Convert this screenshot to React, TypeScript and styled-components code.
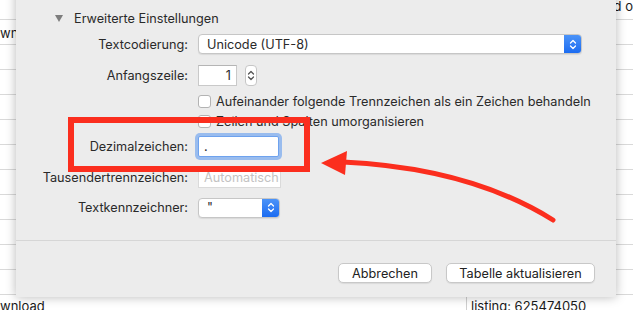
import React from 'react'
import styled, { createGlobalStyle } from 'styled-components'

const GlobalStyle = createGlobalStyle`
	html, body {
		margin: 0;
		padding: 0;
		background: #fff;
	}
	body {
		width: 633px;
		height: 310px;
		overflow: hidden;
		font-family: Inter, 'Noto Sans', sans-serif;
		-webkit-font-smoothing: antialiased;
	}
`

const rows = [20, 25, 25, 25, 25, 25, 25, 25, 25, 25, 25, 25]

export default function App() {
	return (
		<>
			<GlobalStyle />
			<Page>
				<Table>
					{rows.map((h, i) => (
						<TableRow key={i} $h={h}>
							<LeftCell>{i === 1 ? 'wn' : ''}</LeftCell>
							<RightCell $top={i === 0}>{i === 0 ? 'd o' : ''}</RightCell>
						</TableRow>
					))}
					<LastRow>
						<LeftCell>wnload</LeftCell>
						<DividedCell>listing: 625474050</DividedCell>
					</LastRow>
				</Table>

				<Dialog>
					<Disclosure>
						<Triangle />
						Erweiterte Einstellungen
					</Disclosure>

					<Row $mt={6} $h={20}>
						<Label>Textcodierung:</Label>
						<PopUp $w={384}>
							<PopValue>Unicode (UTF-8)</PopValue>
							<PopArrows>
								<Chevrons color="#fff" />
							</PopArrows>
						</PopUp>
					</Row>

					<Row $mt={11} $h={21}>
						<Label>Anfangszeile:</Label>
						<Inline>
							<NumberField>1</NumberField>
							<Stepper>
								<Chevrons color="#555" />
							</Stepper>
						</Inline>
					</Row>

					<Row $mt={5} $h={20}>
						<span />
						<CheckRow>
							<Box />
							Aufeinander folgende Trennzeichen als ein Zeichen behandeln
						</CheckRow>
					</Row>

					<Row $mt={0} $h={20}>
						<span />
						<CheckRow>
							<Box />
							Zeilen und Spalten umorganisieren
						</CheckRow>
					</Row>

					<Row $mt={4} $h={22}>
						<Label>Dezimalzeichen:</Label>
						<TextField $w={81} $focused>.</TextField>
					</Row>

					<Row $mt={10} $h={21}>
						<Label>Tausendertrennzeichen:</Label>
						<TextField $w={83} $disabled>Automatisch</TextField>
					</Row>

					<Row $mt={9} $h={21}>
						<Label>Textkennzeichner:</Label>
						<PopUp $w={82}>
							<PopValue>"</PopValue>
							<PopArrows>
								<Chevrons color="#fff" />
							</PopArrows>
						</PopUp>
					</Row>

					<Separator />

					<Footer>
						<Button $w={94}>Abbrechen</Button>
						<Button $w={149}>Tabelle aktualisieren</Button>
					</Footer>
				</Dialog>

				<Annotation width="633" height="310" viewBox="0 0 633 310">
					<rect
						x="71"
						y="120"
						width="236"
						height="49"
						fill="none"
						stroke="#fb2e1e"
						strokeWidth="6"
					/>
					<path
						d="M553 220 Q 470 168 343 162"
						fill="none"
						stroke="#fb2e1e"
						strokeWidth="5"
						strokeLinecap="round"
					/>
					<polygon points="321,163 347,151 345,175" fill="#fb2e1e" />
				</Annotation>
			</Page>
		</>
	)
}

const Chevrons = ({ color }: { color: string }) => (
	<svg width="8" height="13" viewBox="0 0 8 13">
		<path
			d="M1.5 5 L4 2.5 L6.5 5 M1.5 8 L4 10.5 L6.5 8"
			fill="none"
			stroke={color}
			strokeWidth="1.3"
			strokeLinecap="round"
			strokeLinejoin="round"
		/>
	</svg>
)

const Page = styled.div`
	position: relative;
	width: 633px;
	height: 310px;
	overflow: hidden;
`

const Table = styled.div`
	display: flex;
	flex-direction: column;
	font-size: 13px;
	color: #1a1a1a;
`

const TableRow = styled.div<{ $h: number }>`
	height: ${p => p.$h}px;
	border-bottom: 1px solid #d9d9d9;
	display: flex;
	align-items: center;
	box-sizing: border-box;
`

const LastRow = styled.div`
	height: 20px;
	display: flex;
	align-items: stretch;
`

const LeftCell = styled.div`
	width: 466px;
	display: flex;
	align-items: center;
	padding-top: 2px;
`

const RightCell = styled.div<{ $top: boolean }>`
	flex: 1;
	padding-left: 151px;
	align-self: ${p => (p.$top ? 'flex-start' : 'center')};
	line-height: 12px;
	margin-top: 0;
	white-space: nowrap;
`

const DividedCell = styled.div`
	flex: 1;
	border-left: 1px solid #cfcfcf;
	padding-left: 4px;
	padding-top: 2px;
	display: flex;
	align-items: center;
`

const Dialog = styled.div`
	position: absolute;
	left: 16px;
	top: -20px;
	width: 600px;
	height: 317px;
	box-sizing: border-box;
	padding-top: 28px;
	background: #ececec;
	box-shadow: 0 0 10px rgba(0, 0, 0, 0.28);
	display: flex;
	flex-direction: column;
	font-size: 12.7px;
	color: #2a2a2a;
`

const Disclosure = styled.div`
	height: 20px;
	display: flex;
	align-items: center;
	gap: 11px;
	padding-left: 39px;
`

const Triangle = styled.span`
	width: 0;
	height: 0;
	border-left: 4px solid transparent;
	border-right: 4px solid transparent;
	border-top: 7px solid #7d7d7d;
`

const Row = styled.div<{ $mt: number; $h: number }>`
	display: grid;
	grid-template-columns: 172px 1fr;
	column-gap: 10px;
	align-items: center;
	margin-top: ${p => p.$mt}px;
	height: ${p => p.$h}px;
`

const Label = styled.div`
	text-align: right;
	white-space: nowrap;
`

const PopUp = styled.div<{ $w: number }>`
	width: ${p => p.$w}px;
	height: 20px;
	box-sizing: border-box;
	display: flex;
	background: #fff;
	border: 1px solid #c6c6c6;
	border-radius: 4px;
	box-shadow: 0 1px 1px rgba(0, 0, 0, 0.08);
	overflow: hidden;
`

const PopValue = styled.div`
	flex: 1;
	padding-left: 8px;
	display: flex;
	align-items: center;
`

const PopArrows = styled.div`
	width: 17px;
	display: flex;
	align-items: center;
	justify-content: center;
	background: linear-gradient(#4b93f8, #1c6cf1);
`

const Inline = styled.div`
	display: flex;
	align-items: center;
	gap: 8px;
`

const NumberField = styled.div`
	width: 39px;
	height: 21px;
	box-sizing: border-box;
	background: #fff;
	border: 1px solid #c9c9c9;
	border-top-color: #b5b5b5;
	display: flex;
	align-items: center;
	justify-content: flex-end;
	padding-right: 5px;
`

const Stepper = styled.div`
	width: 12px;
	height: 21px;
	box-sizing: border-box;
	background: #fff;
	border: 1px solid #c6c6c6;
	border-radius: 4px;
	display: flex;
	align-items: center;
	justify-content: center;
`

const CheckRow = styled.div`
	display: flex;
	align-items: center;
	gap: 5px;
	white-space: nowrap;
`

const Box = styled.span`
	width: 13px;
	height: 13px;
	box-sizing: border-box;
	background: #fff;
	border: 1px solid #b3b3b3;
	border-radius: 3px;
`

const TextField = styled.div<{ $w: number; $focused?: boolean; $disabled?: boolean }>`
	width: ${p => p.$w}px;
	height: ${p => (p.$focused ? 21 : 20)}px;
	box-sizing: border-box;
	background: #fff;
	padding-left: 5px;
	display: flex;
	align-items: center;
	border: 1px solid ${p => (p.$focused ? '#6ea2ee' : p.$disabled ? '#dadada' : '#c9c9c9')};
	color: ${p => (p.$disabled ? '#c3c3c3' : '#262626')};
	box-shadow: ${p => (p.$focused ? '0 0 0 3px rgba(98, 156, 240, 0.6)' : 'none')};
	border-radius: ${p => (p.$focused ? '2px' : '0')};
`

const Separator = styled.div`
	margin-top: 22px;
	height: 1px;
	background: #d6d6d6;
`

const Footer = styled.div`
	display: flex;
	justify-content: flex-end;
	gap: 14px;
	padding: 22px 21px 0 0;
`

const Button = styled.div<{ $w: number }>`
	width: ${p => p.$w}px;
	height: 20px;
	box-sizing: border-box;
	background: #fff;
	border: 1px solid #c8c8c8;
	border-radius: 5px;
	box-shadow: 0 1px 1px rgba(0, 0, 0, 0.08);
	display: flex;
	align-items: center;
	justify-content: center;
	color: #222;
`

const Annotation = styled.svg`
	position: absolute;
	left: 0;
	top: 0;
	pointer-events: none;
`
